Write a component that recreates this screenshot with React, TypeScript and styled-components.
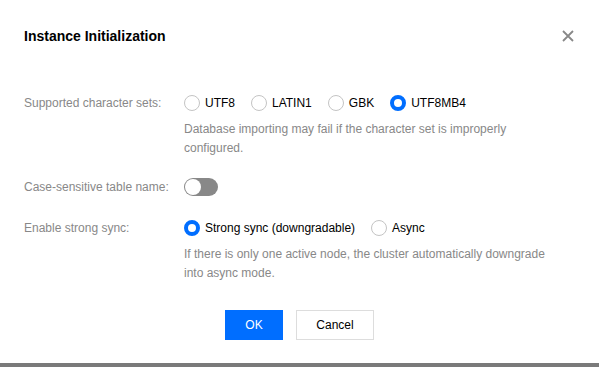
import React, { useState } from 'react';
import styled, { createGlobalStyle } from 'styled-components';

const GlobalStyle = createGlobalStyle`
  html, body {
    margin: 0;
    padding: 0;
    background: #7a7a7a;
  }
  body {
    font-family: "Liberation Sans", Arial, sans-serif;
    font-size: 12px;
    color: #000;
  }
`;

const Dialog = styled.div`
  width: 599px;
  height: 363px;
  box-sizing: border-box;
  background: #fff;
  padding: 26px 24px 0 24px;
  display: flex;
  flex-direction: column;
`;

const Header = styled.div`
  display: flex;
  align-items: center;
  justify-content: space-between;
  height: 20px;
`;

const Title = styled.h2`
  margin: 0;
  font-size: 14px;
  font-weight: 700;
  color: #000;
`;

const CloseBtn = styled.button`
  border: none;
  background: none;
  padding: 0;
  width: 12px;
  height: 12px;
  margin-right: 1px;
  display: flex;
  cursor: pointer;
`;

const Form = styled.div`
  display: flex;
  flex-direction: column;
  margin-top: 47px;
`;

const Row = styled.div<{ gap?: number }>`
  display: flex;
  align-items: flex-start;
  margin-bottom: ${({ gap }) => gap ?? 0}px;
`;

const Label = styled.div`
  width: 160px;
  flex-shrink: 0;
  color: #888;
  line-height: 20px;
`;

const Control = styled.div`
  display: flex;
  flex-direction: column;
  width: 372px;
`;

const RadioGroup = styled.div`
  display: flex;
  align-items: center;
  height: 20px;
`;

const RadioItem = styled.label`
  display: flex;
  align-items: center;
  margin-right: 16px;
  cursor: pointer;
  color: #000;
`;

const RadioDot = styled.span<{ checked?: boolean }>`
  width: 16px;
  height: 16px;
  box-sizing: border-box;
  border-radius: 50%;
  border: ${({ checked }) => (checked ? '4px solid #006eff' : '1px solid #c4c4c4')};
  background: #fff;
  margin-right: 5px;
`;

const Help = styled.div`
  color: #888;
  line-height: 19px;
  margin-top: 7px;
`;

const Switch = styled.button<{ on?: boolean }>`
  width: 34px;
  height: 18px;
  border: none;
  border-radius: 9px;
  padding: 1px;
  margin-top: 1px;
  background: ${({ on }) => (on ? '#006eff' : '#888')};
  display: flex;
  justify-content: ${({ on }) => (on ? 'flex-end' : 'flex-start')};
  cursor: pointer;
`;

const Knob = styled.span`
  width: 16px;
  height: 16px;
  border-radius: 50%;
  background: #fff;
`;

const Footer = styled.div`
  display: flex;
  justify-content: center;
  gap: 13px;
  margin-top: 27px;
`;

const Button = styled.button<{ primary?: boolean }>`
  height: 30px;
  min-width: ${({ primary }) => (primary ? 58 : 78)}px;
  box-sizing: border-box;
  padding: 0 16px;
  font-family: inherit;
  font-size: 12px;
  border: 1px solid ${({ primary }) => (primary ? '#006eff' : '#ddd')};
  background: ${({ primary }) => (primary ? '#006eff' : '#fff')};
  color: ${({ primary }) => (primary ? '#fff' : '#000')};
  cursor: pointer;
`;

const charsets = ['UTF8', 'LATIN1', 'GBK', 'UTF8MB4'];
const syncModes = ['Strong sync (downgradable)', 'Async'];

export default function App() {
  const [charset, setCharset] = useState('UTF8MB4');
  const [caseSensitive, setCaseSensitive] = useState(false);
  const [sync, setSync] = useState(syncModes[0]);

  return (
    <>
      <GlobalStyle />
      <Dialog>
        <Header>
          <Title>Instance Initialization</Title>
          <CloseBtn aria-label="close">
            <svg width="12" height="12" viewBox="0 0 12 12">
              <path d="M1 1L11 11M11 1L1 11" stroke="#888" strokeWidth="1.8" />
            </svg>
          </CloseBtn>
        </Header>
        <Form>
          <Row gap={19}>
            <Label>Supported character sets:</Label>
            <Control>
              <RadioGroup>
                {charsets.map((c) => (
                  <RadioItem key={c} onClick={() => setCharset(c)}>
                    <RadioDot checked={charset === c} />
                    {c}
                  </RadioItem>
                ))}
              </RadioGroup>
              <Help>Database importing may fail if the character set is improperly configured.</Help>
            </Control>
          </Row>
          <Row gap={21}>
            <Label>Case-sensitive table name:</Label>
            <Control>
              <Switch on={caseSensitive} onClick={() => setCaseSensitive(!caseSensitive)}>
                <Knob />
              </Switch>
            </Control>
          </Row>
          <Row>
            <Label>Enable strong sync:</Label>
            <Control>
              <RadioGroup>
                {syncModes.map((s) => (
                  <RadioItem key={s} onClick={() => setSync(s)}>
                    <RadioDot checked={sync === s} />
                    {s}
                  </RadioItem>
                ))}
              </RadioGroup>
              <Help>If there is only one active node, the cluster automatically downgrade into async mode.</Help>
            </Control>
          </Row>
        </Form>
        <Footer>
          <Button primary>OK</Button>
          <Button>Cancel</Button>
        </Footer>
      </Dialog>
    </>
  );
}
